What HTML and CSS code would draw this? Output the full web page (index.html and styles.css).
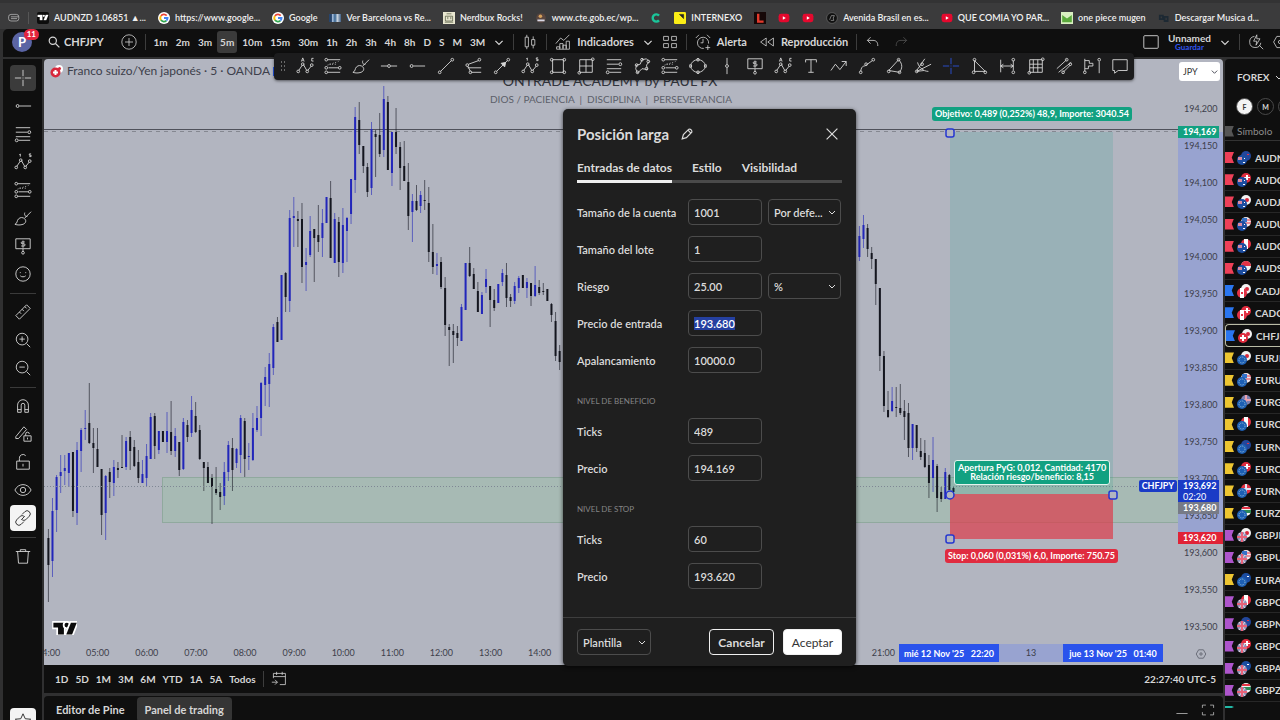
FILE: index.html
```
<!DOCTYPE html>
<html lang="es">
<head>
    <meta charset="UTF-8">
    <meta name="viewport" content="width=device-width, initial-scale=1.0">
    <title>CHFJPY 193,692 Unnamed</title>
    <link rel="stylesheet" href="styles.css">
</head>
<body>

    <!-- icons -->
    <svg class="sprite" aria-hidden="true">
        <symbol id="cross" viewBox="0 0 20 20"><path d="M10 1v7M10 12v7M1 10h7M12 10h7M9.5 10h1"/></symbol>
        <symbol id="ray" viewBox="0 0 20 20"><circle cx="4" cy="10" r="1.6"/><path d="M6 10h13"/></symbol>
        <symbol id="hline" viewBox="0 0 20 20"><circle cx="10" cy="10" r="1.6"/><path d="M1 10h7M12 10h7"/></symbol>
        <symbol id="fib" viewBox="0 0 20 20"><path d="M2 3h16M2 8h13M2 13h16M5 17h13"/><circle cx="17" cy="8" r="1.6"/><circle cx="3" cy="17" r="1.6"/></symbol>
        <symbol id="wave" viewBox="0 0 20 20"><path d="M3 15L7 9M8 8l4 7M13 15l4-5"/><circle cx="2.5" cy="16" r="1.5"/><circle cx="7.5" cy="8" r="1.5"/><circle cx="12.5" cy="16" r="1.5"/><circle cx="17.5" cy="9" r="1.5"/><path d="M7 4V1l-1 1M19 1h-2v1.500h2v1.500h-2"/></symbol>
        <symbol id="abc" viewBox="0 0 20 20"><path d="M3 15L7 9M8 8l4 7M13 15l4-5"/><circle cx="2.500" cy="16" r="1.500"/><circle cx="7.500" cy="8" r="1.500"/><circle cx="12.500" cy="16" r="1.500"/><circle cx="17.500" cy="9" r="1.500"/><path d="M6 5l1.500-4L9 5M7 4h1M19.500 1.500h-2v3h2"/></symbol>
        <symbol id="forecast" viewBox="0 0 20 20"><path d="M4 3h14M5 12h11M4 17h14"/><circle cx="2.500" cy="3" r="1.500"/><circle cx="2.500" cy="12" r="1.500"/><circle cx="17.500" cy="12" r="1.500"/><circle cx="2.500" cy="17" r="1.500"/><path d="M4 9l12-4M6 8h9" stroke-dasharray="1 2"/></symbol>
        <symbol id="brush" viewBox="0 0 20 20"><path d="M1 17c3-1 2-4 4-6 2-2 5-2 7 0s1 5-2 6c-3 1-6 1-9 0zM12 10l7-7M12 4c-1 3 1 5 3 4"/></symbol>
        <symbol id="pricenote" viewBox="0 0 20 20"><path d="M2 2h16v11H2zM10 13v3M12 5.500H9a1 1 0 0 0 0 2h2a1 1 0 0 1 0 2.500H8M10 4v8"/><circle cx="10" cy="17.500" r="1.500"/></symbol>
        <symbol id="smile" viewBox="0 0 20 20"><circle cx="10" cy="10" r="8"/><path d="M7 8v1M13 8v1M7 12c1 1.500 5 1.500 6 0"/></symbol>
        <symbol id="ruler" viewBox="0 0 20 20"><path d="M2 14L14 2l4 4L6 18zM6 10l2 2M9 7l2 2M12 4l2 2"/></symbol>
        <symbol id="zoomin" viewBox="0 0 20 20"><circle cx="9" cy="9" r="6.500"/><path d="M14 14l4 4M6 9h6M9 6v6"/></symbol>
        <symbol id="zoomout" viewBox="0 0 20 20"><circle cx="9" cy="9" r="6.500"/><path d="M14 14l4 4M6 9h6"/></symbol>
        <symbol id="magnet" viewBox="0 0 20 20"><path d="M4 17V9a6 6 0 0 1 12 0v8h-4V9a2 2 0 0 0-4 0v8zM4 14h4M12 14h4"/></symbol>
        <symbol id="lockpen" viewBox="0 0 20 20"><path d="M2 13L11 2l3 3-9 10H2zM11 12h8v6h-8zM13 12v-2a2 2 0 0 1 4 0M15 14v2"/></symbol>
        <symbol id="lock" viewBox="0 0 20 20"><path d="M3 9h14v9H3zM6 9V6a4 4 0 0 1 7-3M10 12v3"/></symbol>
        <symbol id="eye" viewBox="0 0 20 20"><path d="M1 10c4-8 14-8 18 0-4 8-14 8-18 0z"/><circle cx="10" cy="10" r="3"/></symbol>
        <symbol id="link" viewBox="0 0 20 20"><path d="M9 6l3-3a3.500 3.500 0 0 1 5 5l-4 4a3.500 3.500 0 0 1-4 0M11 14l-3 3a3.500 3.500 0 0 1-5-5l4-4a3.500 3.500 0 0 1 4 0M8 12l4-4"/></symbol>
        <symbol id="trash" viewBox="0 0 20 20"><path d="M2 5h16M7 5V3h6v2M4 5l1 13h10l1-13"/></symbol>
        <symbol id="star" viewBox="0 0 20 20"><path d="M10 2l2.500 5.500 6 .5-4.500 4 1.500 6-5.500-3-5.500 3L6 12 1.500 8l6-.5z"/></symbol>
        <symbol id="search" viewBox="0 0 20 20"><circle cx="8" cy="8" r="6"/><path d="M12.500 12.500L19 19"/></symbol>
        <symbol id="plus" viewBox="0 0 20 20"><circle cx="10" cy="10" r="9"/><path d="M10 5v10M5 10h10"/></symbol>
        <symbol id="down" viewBox="0 0 10 10"><path d="M2 4l3 3 3-3"/></symbol>
        <symbol id="candles" viewBox="0 0 20 20"><path d="M4 4h4v12H4zM12 7h4v7h-4zM6 1v3M6 16v3M14 3v4M14 14v4"/></symbol>
        <symbol id="indic" viewBox="0 0 20 20"><path d="M1 12L7 5l4 3 7-7M2 19v-3h4v3M6 18v-6h4v7M10 18v-4h4v5M14 18V9h4v10H2"/></symbol>
        <symbol id="grid4" viewBox="0 0 20 20"><path d="M2 3h6v5H2zM12 3h6v5h-6zM2 12h6v5H2zM12 12h6v5h-6z"/></symbol>
        <symbol id="alarm" viewBox="0 0 20 20"><path d="M17 12a7 7 0 1 0-6 6M10 6v5H7M1 5l4-4M15 1l4 4M16 14v6M13 17h6"/></symbol>
        <symbol id="replay" viewBox="0 0 20 20"><path d="M9 5v10l-7-5zM18 5v10l-7-5z"/></symbol>
        <symbol id="undo" viewBox="0 0 20 20"><path d="M7 4L3 8l4 4M3 8h7c4 0 6 2 6 7"/></symbol>
        <symbol id="redo" viewBox="0 0 20 20"><path d="M13 4l4 4-4 4M17 8h-7c-4 0-6 2-6 7"/></symbol>
        <symbol id="square" viewBox="0 0 20 20"><rect x="2" y="3" width="16" height="14" rx="1"/></symbol>
        <symbol id="boltsearch" viewBox="0 0 20 20"><path d="M8 3a7 7 0 1 0 8 8M14 14l5 5M11 1L7 9h4l-1 5 5-8h-4z"/></symbol>
        <symbol id="trend" viewBox="0 0 20 20"><circle cx="3" cy="17" r="1.500"/><circle cx="17" cy="3" r="1.500"/><path d="M4 16L16 4"/></symbol>
        <symbol id="pitch" viewBox="0 0 20 20"><path d="M4 8L15 4M3 12h15M7 17h11M3 10l3 6"/><circle cx="2.500" cy="9" r="1.500"/><circle cx="16" cy="3" r="1.500"/><circle cx="6" cy="17" r="1.500"/></symbol>
        <symbol id="arrow" viewBox="0 0 20 20"><circle cx="3" cy="17" r="1.500"/><path d="M4 16L16 4"/><circle cx="17" cy="3" r="1.500"/><path class="fill" d="M14 6l-5 1 4 4z"/></symbol>
        <symbol id="rect" viewBox="0 0 20 20"><path d="M4 3h12v14H4z"/><circle cx="3" cy="3" r="1.500"/><circle cx="17" cy="3" r="1.500"/><circle cx="3" cy="17" r="1.500"/><circle cx="17" cy="17" r="1.500"/></symbol>
        <symbol id="gann" viewBox="0 0 20 20"><path d="M3 3h14v14H3zM10 3v14M3 10h14"/><circle cx="17.500" cy="2.500" r="1.500"/><circle cx="2.500" cy="17.500" r="1.500"/></symbol>
        <symbol id="path" viewBox="0 0 20 20"><path d="M4 9l4-1 2-5 5-1 3 3-3 4 1 5-6-1-5 5-2-5z"/><circle cx="4" cy="9" r="1.500"/><circle cx="10" cy="3" r="1.500"/><circle cx="17" cy="5" r="1.500"/><circle cx="15" cy="13" r="1.500"/><circle cx="5" cy="17" r="1.500"/></symbol>
        <symbol id="ellipse" viewBox="0 0 20 20"><ellipse cx="10" cy="10" rx="8" ry="7"/><circle cx="1.500" cy="10" r="1.500"/><circle cx="18.500" cy="10" r="1.500"/><circle cx="10" cy="3" r="1.500"/><circle cx="10" cy="17" r="1.500"/></symbol>
        <symbol id="vline" viewBox="0 0 20 20"><path d="M10 1v7M10 12v7"/><circle cx="10" cy="10" r="1.600"/></symbol>
        <symbol id="text" viewBox="0 0 20 20"><path d="M4 6V3h12v3M10 3v14M7 17h6"/></symbol>
        <symbol id="zigzag" viewBox="0 0 20 20"><path d="M1 15l5-7 5 6 7-9M13 5h5v5"/></symbol>
        <symbol id="curve" viewBox="0 0 20 20"><path d="M3 16c1-8 5-5 6-7l7-5"/><circle cx="3" cy="17" r="1.500"/><circle cx="9" cy="8" r="1.500"/><circle cx="17" cy="3" r="1.500"/></symbol>
        <symbol id="sector" viewBox="0 0 20 20"><path d="M3 15L14 3c5 5 4 10 1 14L3 15"/><circle cx="3" cy="16" r="1.500"/><circle cx="14" cy="3" r="1.500"/><circle cx="15" cy="17" r="1.500"/></symbol>
        <symbol id="fan" viewBox="0 0 20 20"><path d="M3 15L12 2M3 16l16-8M4 6c1 5 6 10 12 10M3 16l8-1"/><circle cx="3" cy="16" r="1.500"/><circle cx="9" cy="8" r="1.500"/></symbol>
        <symbol id="triangle" viewBox="0 0 20 20"><path d="M5 4v12h12z"/><circle cx="5" cy="3" r="1.500"/><circle cx="4" cy="17" r="1.500"/><circle cx="17" cy="17" r="1.500"/></symbol>
        <symbol id="range" viewBox="0 0 20 20"><path d="M3 3v14M17 4v11M3 10h13M6 8l-3 2 3 2M14 8l3 2-3 2"/><circle cx="17" cy="3" r="1.500"/><circle cx="17" cy="17" r="1.500"/></symbol>
        <symbol id="gridbox" viewBox="0 0 20 20"><path d="M3 3h14v14H3zM7 3v14M12 3v14M3 8h14M3 12h14"/><circle cx="17.500" cy="2.500" r="1.500"/><circle cx="2.500" cy="17.500" r="1.500"/></symbol>
        <symbol id="channel" viewBox="0 0 20 20"><path d="M2 13L13 3M4 17L18 6M9 17l8-8"/><circle cx="13" cy="3" r="1.500"/><circle cx="17" cy="8" r="1.500"/><circle cx="9" cy="17" r="1.500"/></symbol>
        <symbol id="profile" viewBox="0 0 20 20"><path d="M2 2v14M2 4h5v3h4v3H6v3H2M18 5v13"/><circle cx="2" cy="17" r="1.500"/><circle cx="18" cy="3" r="1.500"/></symbol>
        <symbol id="comment" viewBox="0 0 20 20"><path d="M2 3h16v12H8l-4 3v-3H2z"/></symbol>
        <symbol id="calendar" viewBox="0 0 20 20"><path d="M3 9V3h15v14h-7M3 7h15M7 1v4M14 1v4M1 14h7M5 11l3 3-3 3"/></symbol>
        <symbol id="pencil" viewBox="0 0 20 20"><path d="M2 18l2-7 9-9c3-1 6 2 5 5l-9 9zM12 4l4 4"/></symbol>
        <symbol id="close" viewBox="0 0 20 20"><path d="M1 1l18 18M19 1L1 19"/></symbol>
        <symbol id="hex" viewBox="0 0 20 20"><path d="M6 3h8l4 7-4 7H6l-4-7z"/><circle cx="10" cy="10" r="2"/></symbol>
        <symbol id="full" viewBox="0 0 20 20"><path d="M2 7V3h5M13 3h5v4M18 13v4h-5M7 17H2v-4"/></symbol>
        <symbol id="google" viewBox="0 0 20 20"><circle cx="10" cy="10" r="10" fill="#fff" stroke="none"/><path d="M14.500 6A6 6 0 0 0 5 6.500" stroke="#ea4335" stroke-width="3"/><path d="M5 6.500a6 6 0 0 0 0 7" stroke="#fbbc05" stroke-width="3"/><path d="M5 13.500a6 6 0 0 0 9 1" stroke="#34a853" stroke-width="3"/><path d="M10 10h6c0 2-1 3.500-2 4.500" stroke="#4285f4" stroke-width="3"/></symbol>
        <symbol id="youtube" viewBox="0 0 20 20"><rect x="1" y="3" width="18" height="14" rx="4" fill="#e5092e" stroke="none"/><path d="M8 7l5 3-5 3z" fill="#fff" stroke="none"/></symbol>
        <symbol id="tv" viewBox="0 0 22 12"><path d="M1 1h9v10H5V5H1z"/><circle cx="12.500" cy="3" r="2"/><path d="M16 1h5l-4 10h-5z"/></symbol>
    </svg>

    <nav class="bookmarks" aria-label="Marcadores">
        <svg class="icon" viewBox="0 0 20 20"><rect x="1" y="4" width="17" height="11" rx="4"/><path d="M5 8h13M5 11h10"/></svg>
        <span class="divider"></span>
        <a href="#"><span class="fav black"><svg viewBox="0 0 22 12"><use href="#tv"/></svg></span>AUDNZD 1.06851 ▲...</a>
        <a href="#"><svg class="fav"><use href="#google"/></svg>https://www.google...</a>
        <a href="#"><svg class="fav"><use href="#google"/></svg>Google</a>
        <a href="#"><span class="fav fcb"></span>Ver Barcelona vs Re...</a>
        <a href="#"><svg class="fav" viewBox="0 0 20 20"><rect width="20" height="20" fill="#e9e7d0" stroke="none"/><path d="M4 7h12v8H4zM6 3h8M3 17h14M8 8v4M13 8v4" stroke="#333a22"/></svg>Nerdbux Rocks!</a>
        <a href="#"><svg class="fav" viewBox="0 0 20 20"><circle cx="10" cy="10" r="8" fill="#59463f" stroke="none"/><circle cx="9" cy="7" r="3" fill="#d5a05b" stroke="none"/><path d="M4 14h12" stroke="#d8d8e6" stroke-width="3"/></svg>www.cte.gob.ec/wp...</a>
        <a href="#" class="solo" aria-label="C"><svg class="fav" viewBox="0 0 20 20"><path d="M15 6a6 6 0 1 0 0 8" stroke="#1bc59a" stroke-width="4"/></svg></a>
        <a href="#"><svg class="fav" viewBox="0 0 20 20"><rect width="20" height="20" rx="2" fill="#fbee16" stroke="none"/><path d="M9 4h7v7z" fill="#222" stroke="#222"/></svg>INTERNEXO</a>
        <a href="#" class="solo" aria-label="L"><svg class="fav" viewBox="0 0 20 20"><rect width="20" height="20" fill="#160808" stroke="none"/><path d="M7 3v13h9" stroke="#e43a2c" stroke-width="4"/></svg></a>
        <a href="#" class="solo" aria-label="YouTube"><svg class="fav"><use href="#youtube"/></svg></a>
        <a href="#" class="solo" aria-label="YouTube"><svg class="fav"><use href="#youtube"/></svg></a>
        <a href="#"><svg class="fav" viewBox="0 0 20 20"><circle cx="10" cy="10" r="9" fill="#111" stroke="#777"/><path d="M6 13L9 6h5l-2 4 1 4H8" stroke="#bbb"/></svg>Avenida Brasil en es...</a>
        <a href="#"><svg class="fav"><use href="#youtube"/></svg>QUE COMIA YO PAR...</a>
        <a href="#"><svg class="fav" viewBox="0 0 20 20"><rect width="20" height="20" fill="#d8efc0" stroke="none"/><path d="M2 5l8 6 8-6v12H2z" fill="#5aa93c" stroke="none"/></svg>one piece mugen</a>
        <a href="#"><svg class="fav" viewBox="0 0 20 20"><path d="M3 6h5v6H3zM11 8h5v7h-5z" stroke="#1d2933" stroke-width="3"/></svg>Descargar Musica d...</a>
    </nav>

    <div class="app">
        <header class="topbar">
            <span class="avatar">P<span class="badge">11</span></span>
            <button class="symbol"><svg class="icon small"><use href="#search"/></svg>CHFJPY</button>
            <button aria-label="Comparar"><svg class="icon"><use href="#plus"/></svg></button>
            <span class="divider"></span>
            <div class="intervals">
                <button>1m</button><button>2m</button><button>3m</button><button class="on">5m</button>
                <button>10m</button><button>15m</button><button>30m</button><button>1h</button>
                <button>2h</button><button>3h</button><button>4h</button><button>8h</button>
                <button>D</button><button>S</button><button>M</button><button>3M</button>
            </div>
            <button aria-label="Intervalos"><svg class="icon chev"><use href="#down"/></svg></button>
            <span class="divider"></span>
            <button aria-label="Velas"><svg class="icon"><use href="#candles"/></svg></button>
            <span class="divider"></span>
            <button><svg class="icon"><use href="#indic"/></svg>Indicadores</button>
            <button aria-label="Favoritos"><svg class="icon chev"><use href="#down"/></svg></button>
            <button aria-label="Plantillas"><svg class="icon"><use href="#grid4"/></svg></button>
            <span class="divider"></span>
            <button><svg class="icon"><use href="#alarm"/></svg>Alerta</button>
            <button class="replay"><svg class="icon"><use href="#replay"/></svg>Reproducción</button>
            <span class="divider"></span>
            <button aria-label="Deshacer"><svg class="icon"><use href="#undo"/></svg></button>
            <button class="dim" aria-label="Rehacer"><svg class="icon"><use href="#redo"/></svg></button>
            <div class="topright">
                <button aria-label="Diseño"><svg class="icon big"><use href="#square"/></svg></button>
                <button class="layout"><span>Unnamed</span><small>Guardar</small></button>
                <button aria-label="Diseños"><svg class="icon chev"><use href="#down"/></svg></button>
                <span class="divider"></span>
                <button aria-label="Búsqueda rápida"><svg class="icon"><use href="#boltsearch"/></svg></button>
                <button class="cut" aria-label="Ajustes"><svg class="icon"><use href="#hex"/></svg></button>
            </div>
        </header>

        <aside class="tools">
            <button class="on" aria-label="Cruz"><svg class="icon"><use href="#cross"/></svg></button>
            <button aria-label="Rayo"><svg class="icon"><use href="#ray"/></svg></button>
            <button aria-label="Fibonacci"><svg class="icon"><use href="#fib"/></svg></button>
            <button aria-label="Patrones"><svg class="icon"><use href="#wave"/></svg></button>
            <button aria-label="Previsión"><svg class="icon"><use href="#forecast"/></svg></button>
            <button aria-label="Pincel"><svg class="icon"><use href="#brush"/></svg></button>
            <button aria-label="Nota de precio"><svg class="icon"><use href="#pricenote"/></svg></button>
            <button aria-label="Iconos"><svg class="icon"><use href="#smile"/></svg></button>
            <hr>
            <button aria-label="Medir"><svg class="icon"><use href="#ruler"/></svg></button>
            <button aria-label="Acercar"><svg class="icon"><use href="#zoomin"/></svg></button>
            <button aria-label="Alejar"><svg class="icon"><use href="#zoomout"/></svg></button>
            <hr>
            <button aria-label="Imán"><svg class="icon"><use href="#magnet"/></svg></button>
            <button aria-label="Modo dibujo"><svg class="icon"><use href="#lockpen"/></svg></button>
            <button aria-label="Bloquear"><svg class="icon"><use href="#lock"/></svg></button>
            <button aria-label="Ocultar"><svg class="icon"><use href="#eye"/></svg></button>
            <button class="white" aria-label="Sincronizar"><svg class="icon"><use href="#link"/></svg></button>
            <hr>
            <button aria-label="Eliminar"><svg class="icon"><use href="#trash"/></svg></button>
            <button class="white last" aria-label="Favoritos"><svg class="icon"><use href="#star"/></svg></button>
        </aside>

        <main class="center">
            <section class="chart">
                <svg class="plot" viewBox="44 59 1179 606" preserveAspectRatio="xMinYMin slice">
                    <rect class="zone" x="162.500" y="477.500" width="1016" height="45"/>
                    <path class="level" d="M44 129.500h1134"/>
                    <path class="level dash" d="M44 131.500h1134"/>
                    <g id="candlesLayer"></g>
                    <path class="current" d="M44 486.500h1134"/>
                    <rect class="profit" x="950" y="132" width="163" height="362"/>
                    <rect class="loss" x="950" y="494" width="163" height="45"/>
                    <g class="handles">
                        <rect x="946" y="129" width="8" height="8" rx="2"/>
                        <circle cx="950" cy="495" r="4"/>
                        <rect x="1109" y="491" width="8" height="8" rx="2"/>
                        <rect x="946" y="535" width="8" height="8" rx="2"/>
                    </g>
                </svg>

                <div class="legend">
                    <svg class="pair" viewBox="0 0 14 14"><circle cx="9" cy="5" r="4" fill="#fff"/><circle cx="9.500" cy="4.500" r="1.500" fill="#d8283c"/><circle cx="5.500" cy="8.500" r="5" fill="#d8283c"/><path d="M5.500 6v5M3 8.500h5" stroke="#fff" stroke-width="2"/></svg>
                    Franco suizo/Yen japonés · 5 · OANDA
                    <span class="bluechip"></span>
                </div>
                <div class="watermark">
                    <h1>ONTRADE ACADEMY by PAUL FX</h1>
                    <p>DIOS / PACIENCIA &nbsp;|&nbsp; DISCIPLINA &nbsp;|&nbsp; PERSEVERANCIA</p>
                </div>
                <svg class="tvlogo" viewBox="-1 -1 24 14"><use href="#tv"/></svg>

                <div class="tag target">Objetivo: 0,489 (0,252%) 48,9, Importe: 3040.54</div>
                <div class="tag open">Apertura PyG: 0,012, Cantidad: 4170<br>Relación riesgo/beneficio: 8,15</div>
                <div class="tag stop">Stop: 0,060 (0,031%) 6,0, Importe: 750.75</div>
                <div class="tag pairtag">CHFJPY</div>

                <div class="scale">
                    <span class="band"></span>
                    <select aria-label="Moneda"><option>JPY</option></select>
                    <svg class="icon chev"><use href="#down"/></svg>
                    <ul>
                        <li>194,200</li><li>194,150</li><li>194,100</li><li>194,050</li><li>194,000</li>
                        <li>193,950</li><li>193,900</li><li>193,850</li><li>193,800</li><li>193,750</li>
                        <li>193,700</li><li>193,650</li><li>193,600</li><li>193,550</li><li>193,500</li>
                    </ul>
                    <b class="price green">194,169</b>
                    <b class="price grey">193,680</b>
                    <b class="price blue">193,692<span>02:20</span></b>
                    <b class="price red">193,620</b>
                    <svg class="icon hexicon"><use href="#hex"/></svg>
                </div>

                <div class="timeaxis">
                    <ul>
                        <li>04:00</li><li>05:00</li><li>06:00</li><li>07:00</li><li>08:00</li><li>09:00</li>
                        <li>10:00</li><li>11:00</li><li>12:00</li><li>13:00</li><li>14:00</li><li>15:00</li>
                        <li>16:00</li><li>17:00</li><li>18:00</li><li>19:00</li><li>20:00</li><li>21:00</li>
                    </ul>
                    <div class="span"><b>mié 12 Nov '25 &nbsp; 22:20</b><span>13</span><b>jue 13 Nov '25 &nbsp; 01:40</b></div>
                </div>
            </section>

            <div class="ranges">
                <button>1D</button><button>5D</button><button>1M</button><button>3M</button><button>6M</button>
                <button>YTD</button><button>1A</button><button>5A</button><button>Todos</button>
                <span class="divider"></span>
                <button aria-label="Ir a"><svg class="icon"><use href="#calendar"/></svg></button>
                <button class="clock">22:27:40 UTC-5</button>
            </div>

            <div class="paneltabs">
                <button>Editor de Pine</button>
                <button class="on">Panel de trading</button>
                <div class="panelbtns">
                    <button aria-label="Minimizar"><svg class="icon" viewBox="0 0 20 20"><path d="M2 15h16"/></svg></button>
                    <button aria-label="Maximizar"><svg class="icon"><use href="#full"/></svg></button>
                </div>
            </div>
        </main>

        <aside class="watchlist">
            <h2>FOREX <svg class="icon chev"><use href="#down"/></svg></h2>
            <div class="lists"><button class="on">F</button><button>M</button><button>N</button></div>
            <div class="colhead"><i class="flag"></i>Símbolo</div>
            <ul id="watch"></ul>
            <div class="more"><i class="flag teal"></i></div>
        </aside>

        <div class="drawbar" id="drawbar"></div>

        <form class="dialog" id="dialog">
            <div class="title">
                <h3>Posición larga</h3>
                <button type="button" aria-label="Renombrar"><svg class="icon small"><use href="#pencil"/></svg></button>
                <button type="button" class="x" aria-label="Cerrar"><svg class="icon small"><use href="#close"/></svg></button>
            </div>
            <div class="tabs">
                <button type="button" class="on">Entradas de datos</button>
                <button type="button">Estilo</button>
                <button type="button">Visibilidad</button>
            </div>
            <div class="fields">
                <label for="account">Tamaño de la cuenta</label>
                <input type="text" id="account" value="1001">
                <div class="drop">
                    <select aria-label="Divisa de la cuenta"><option>Por defe...</option></select>
                    <svg class="icon chev"><use href="#down"/></svg>
                </div>
                <label for="lot">Tamaño del lote</label>
                <input type="text" id="lot" value="1">
                <label for="risk">Riesgo</label>
                <input type="text" id="risk" value="25.00">
                <div class="drop">
                    <select aria-label="Unidad de riesgo"><option>%</option></select>
                    <svg class="icon chev"><use href="#down"/></svg>
                </div>
                <label for="entry">Precio de entrada</label>
                <input type="text" id="entry" value="193.680">
                <label for="leverage">Apalancamiento</label>
                <input type="text" id="leverage" value="10000.0">
                <h4>NIVEL DE BENEFICIO</h4>
                <label for="tpTicks">Ticks</label>
                <input type="text" id="tpTicks" value="489">
                <label for="tpPrice">Precio</label>
                <input type="text" id="tpPrice" value="194.169">
                <h4>NIVEL DE STOP</h4>
                <label for="slTicks">Ticks</label>
                <input type="text" id="slTicks" value="60">
                <label for="slPrice">Precio</label>
                <input type="text" id="slPrice" value="193.620">
            </div>
            <div class="actions">
                <div class="drop">
                    <select aria-label="Plantilla"><option>Plantilla</option></select>
                    <svg class="icon chev"><use href="#down"/></svg>
                </div>
                <button type="button" class="cancel">Cancelar</button>
                <button type="button" class="ok">Aceptar</button>
            </div>
        </form>
    </div>

    <script src="app.js"></script>
</body>
</html>
```

FILE: styles.css
```
* {
    box-sizing: border-box;
}

body {
    margin: 0;
    height: 100vh;
    overflow: hidden;
    display: flex;
    flex-direction: column;
    background: #303031;
    color: #d6d6d6;
    font-family: "Trebuchet MS", Lato, sans-serif;
    font-size: 11px;
}

ul, h1, h2, h3, h4, p {
    margin: 0;
    padding: 0;
    list-style: none;
}

button {
    display: flex;
    align-items: center;
    gap: 6px;
    padding: 0;
    border: 0;
    background: none;
    color: inherit;
    font: inherit;
    font-weight: bold;
    white-space: nowrap;
}

svg {
    fill: none;
    stroke: currentColor;
    flex: none;
}

.sprite {
    position: absolute;
    width: 0;
    height: 0;
}

.icon {
    width: 16px;
    height: 16px;
}

.icon.small {
    width: 12px;
    height: 12px;
    stroke-width: 2px;
}

.icon.big {
    width: 18px;
    height: 18px;
}

.icon.chev {
    width: 10px;
    height: 10px;
}

.fill {
    fill: currentColor;
}

.divider {
    width: 1px;
    height: 16px;
    background: #3d3d3d;
}

/* bookmarks */
.bookmarks {
    flex: none;
    height: 29px;
    padding: 3px 8px 0;
    display: flex;
    align-items: center;
    gap: 12px;
    background: #3b3b3c;
    border-top: 3px solid #333334;
    font-family: "Segoe UI", Lato, sans-serif;
    font-size: 9px;
    font-weight: 600;
    overflow: hidden;
}

.bookmarks .icon {
    width: 12px;
    height: 12px;
    margin-right: -4px;
}

.bookmarks .divider {
    height: 12px;
    background: #565656;
    margin-right: -4px;
}

.bookmarks a {
    display: flex;
    align-items: center;
    gap: 5px;
    color: #f0f0f0;
    text-decoration: none;
    white-space: nowrap;
}

.fav {
    width: 12px;
    height: 12px;
}

.fav.black {
    display: flex;
    align-items: center;
    background: #0c0c0c;
    border-radius: 2px;
}

.fav.black svg {
    width: 12px;
    height: 7px;
    fill: #fff;
    stroke: none;
}

.fav.fcb {
    height: 8px;
    background: linear-gradient(90deg, #27446b 20%, #a9c1dd 30%, #34618e 50%, #c9d3de 70%, #3f5f85);
}

/* app */
.app {
    position: relative;
    flex: 1;
    min-height: 0;
    margin-left: 3px;
    display: grid;
    grid-template-columns: 39px minmax(0, 1fr) 55px;
    grid-template-rows: 28px minmax(0, 1fr);
    gap: 2px;
}

.topbar {
    grid-column: 1 / -1;
    display: flex;
    align-items: center;
    gap: 8px;
    padding: 0 0 3px 9px;
    background: #0f0f0f;
    border-radius: 5px 0 0 0;
    overflow: hidden;
}

.topbar .chev {
    width: 12px;
    height: 12px;
}

.avatar {
    position: relative;
    width: 20px;
    height: 20px;
    line-height: 20px;
    margin-right: 8px;
    border-radius: 50%;
    background: #5a64a4;
    color: #fff;
    font-size: 13px;
    font-weight: bold;
    text-align: center;
}

.badge {
    position: absolute;
    top: -3px;
    right: -7px;
    padding: 0 3px;
    border-radius: 6px;
    background: #e3253e;
    font-size: 8px;
    line-height: 11px;
}

.symbol {
    gap: 4px;
    margin-right: 9px;
}

.intervals {
    display: flex;
    gap: 8px;
    font-size: 10px;
}

.intervals .on {
    margin: 0 -3px;
    padding: 5px 3px;
    border-radius: 3px;
    background: #3b3b3b;
}

.replay {
    margin-left: 4px;
}

.dim {
    color: #555;
    margin-left: 4px;
}

.topright {
    margin-left: auto;
    display: flex;
    align-items: center;
    gap: 8px;
}

.layout {
    flex-direction: column;
    gap: 0;
    font-size: 10px;
    line-height: 10px;
}

.layout small {
    color: #2f55f0;
    font-size: 8px;
    line-height: 8px;
}

.cut {
    margin-right: -8px;
}

/* left tools */
.tools {
    display: flex;
    flex-direction: column;
    align-items: center;
    gap: 2px;
    padding-top: 6px;
    background: #0f0f0f;
    overflow: hidden;
}

.tools button {
    flex: none;
    width: 26px;
    height: 26px;
    justify-content: center;
    border-radius: 4px;
}

.tools .icon {
    width: 18px;
    height: 18px;
}

.tools .on {
    background: #3b3b3b;
}

.tools .white {
    background: #f4f4f4;
    color: #222;
}

.tools .last {
    margin-top: auto;
    margin-bottom: -14px;
}

.tools hr {
    width: 26px;
    height: 1px;
    margin: 4px 0 3px;
    border: 0;
    background: #3a3a3a;
    flex: none;
}

/* chart */
.center {
    display: flex;
    flex-direction: column;
    min-height: 0;
}

.chart {
    position: relative;
    flex: 1;
    min-height: 0;
    display: grid;
    grid-template-columns: minmax(0, 1fr) 45px;
    grid-template-rows: minmax(0, 1fr) 24px;
    background: #b2b5c0;
    border-radius: 4px 4px 0 0;
    color: #3d404b;
    overflow: hidden;
}

.plot {
    position: absolute;
    inset: 0;
    width: 100%;
    height: 100%;
}

.zone {
    fill: #a7bab4;
    stroke: #90a99e;
}

.level {
    stroke: #4f515b;
}

.level.dash {
    stroke: #858891;
    stroke-dasharray: 4 4;
}

.current {
    stroke: #7f8794;
    stroke-dasharray: 1 2;
}

.up {
    fill: #2226ba;
    stroke: none;
}

.down {
    fill: #14161f;
    stroke: none;
}

.wick {
    opacity: 0.6;
}

.profit {
    fill: #089981;
    fill-opacity: 0.14;
    stroke: none;
}

.loss {
    fill: #dd3c4a;
    fill-opacity: 0.7;
    stroke: none;
}

.handles {
    fill: #b2b5c0;
    stroke: #2436d0;
    stroke-width: 1.500px;
}

.legend {
    position: absolute;
    top: 4px;
    left: 6px;
    display: flex;
    align-items: center;
    gap: 3px;
    font-size: 12px;
    line-height: 16px;
    white-space: nowrap;
}

.pair {
    width: 14px;
    height: 14px;
    stroke: none;
}

.bluechip {
    width: 12px;
    height: 9px;
    background: #2255e8;
}

.watermark {
    position: absolute;
    top: 13px;
    left: 446px;
    width: 240px;
    text-align: center;
    white-space: nowrap;
}

.watermark h1 {
    font-size: 14px;
    font-weight: normal;
    line-height: 18px;
    color: #33353d;
}

.watermark p {
    font-size: 10px;
    line-height: 18px;
    color: #5c5f69;
}

.tvlogo {
    position: absolute;
    left: 7px;
    top: 561px;
    width: 26px;
    height: 15px;
    fill: #0c0c0c;
    stroke: #fff;
    stroke-width: 3px;
    paint-order: stroke;
}

.tag {
    position: absolute;
    padding: 0 3px;
    border-radius: 3px;
    color: #fff;
    font-size: 9px;
    font-weight: bold;
    line-height: 14px;
    text-align: center;
    white-space: nowrap;
}

.target {
    left: 888px;
    top: 48px;
    background: #12a181;
}

.open {
    left: 910px;
    top: 401px;
    padding: 2px 3px 3px;
    border: 1px solid #e4f3ee;
    background: #12a181;
    line-height: 9px;
}

.stop {
    left: 901px;
    top: 490px;
    background: #e02c40;
}

.pairtag {
    right: 46px;
    top: 421px;
    line-height: 12px;
    border-radius: 2px;
    background: #1a3bc6;
}

.scale {
    position: relative;
    grid-column: 2;
    grid-row: 1 / 3;
    padding-top: 3px;
    font-size: 9px;
}

.scale select {
    position: relative;
    display: block;
    width: 41px;
    height: 19px;
    margin-left: 1px;
    padding: 0 4px;
    appearance: none;
    border: 0;
    border-radius: 3px;
    background: #fff;
    color: #333;
    font: inherit;
}

.scale .chev {
    position: absolute;
    top: 8px;
    right: 4px;
    width: 9px;
    height: 9px;
}

.scale ul {
    position: relative;
    margin-top: 9px;
}

.scale li {
    height: 37px;
    line-height: 37px;
    padding-left: 6px;
}

.band {
    position: absolute;
    inset: 73px 0 126px 0;
    background: #98a3d0;
}

.price {
    position: absolute;
    left: 0;
    width: 41px;
    padding-left: 5px;
    color: #fff;
    line-height: 12px;
}

.price span {
    display: block;
    line-height: 10px;
    font-weight: normal;
}

.green {
    top: 67px;
    background: #12a181;
}

.blue {
    top: 421px;
    background: #1a3bc6;
}

.grey {
    top: 443px;
    background: #777b87;
}

.red {
    top: 473px;
    width: 45px;
    background: #e02336;
}

.hexicon {
    position: absolute;
    right: 16px;
    bottom: 5px;
    width: 12px;
    height: 12px;
}

.timeaxis {
    position: relative;
    grid-column: 1;
    grid-row: 2;
    font-size: 9px;
    overflow: hidden;
}

.timeaxis ul {
    display: flex;
    width: 884px;
    margin-left: -20px;
}

.timeaxis li {
    flex: 1;
    line-height: 24px;
    text-align: center;
}

.span {
    position: absolute;
    left: 855px;
    top: 3px;
    width: 264px;
    display: flex;
    justify-content: space-between;
    background: #98a3d0;
    line-height: 18px;
}

.span b {
    width: 100px;
    background: #2a53ec;
    color: #fff;
    line-height: 20px;
    height: 18px;
    text-align: center;
}

/* bottom bars */
.ranges {
    flex: none;
    display: flex;
    align-items: center;
    gap: 7px;
    height: 28px;
    padding: 0 7px 0 11px;
    margin-bottom: 3px;
    background: #0f0f0f;
    font-size: 10px;
}

.clock {
    margin-left: auto;
}

.paneltabs {
    flex: none;
    display: flex;
    height: 24px;
    padding-left: 4px;
    gap: 4px;
    background: #0f0f0f;
    border-radius: 4px 4px 0 0;
}

.paneltabs button {
    height: 25px;
    margin-top: 1px;
    padding: 0 8px;
    border-radius: 4px;
}

.paneltabs .on {
    background: #353535;
}

.panelbtns {
    margin-left: auto;
    display: flex;
    padding-right: 2px;
}

.panelbtns button {
    padding: 0 6px;
}

.panelbtns .icon {
    width: 14px;
    height: 14px;
}

/* watchlist */
.watchlist {
    display: flex;
    flex-direction: column;
    min-width: 0;
    background: #0f0f0f;
    border-radius: 4px 0 0 0;
    overflow: hidden;
}

.watchlist h2 {
    display: flex;
    align-items: center;
    gap: 4px;
    height: 35px;
    padding-left: 12px;
    font-size: 10px;
}

.lists {
    display: flex;
    gap: 4px;
    padding-left: 11px;
    height: 28px;
}

.lists button {
    flex: none;
    width: 17px;
    height: 17px;
    margin-top: 4px;
    justify-content: center;
    border: 1px solid #4a4a4a;
    border-radius: 50%;
    font-size: 7px;
}

.lists .on {
    background: #f4f4f4;
    color: #333;
}

.colhead {
    display: flex;
    align-items: center;
    gap: 3px;
    height: 19px;
    margin-bottom: 6px;
    border-bottom: 1px solid #333;
    color: #8c8c8c;
    font-size: 10px;
}

.flag {
    flex: none;
    width: 9px;
    height: 11px;
    background: #555;
    clip-path: polygon(0 0, 100% 0, 75% 50%, 100% 100%, 0 100%);
}

.flag.r { background: #ee4058; }
.flag.b { background: #2a76f0; }
.flag.y { background: #edc531; }
.flag.p { background: #ae55cc; }
.flag.teal { background: #22b8a6; }

#watch {
    flex: 1;
    min-height: 0;
    display: flex;
    flex-direction: column;
}

#watch li {
    flex: 1;
    min-height: 0;
    display: flex;
    align-items: center;
    border-bottom: 1px solid #272727;
    font-size: 10px;
    font-weight: bold;
    overflow: hidden;
}

#watch li.on {
    border: 1px solid #b9bba5;
    border-right: 0;
    border-radius: 4px 0 0 4px;
}

#watch svg {
    width: 14px;
    height: 14px;
    margin: 0 4px 0 3px;
    stroke: none;
}

.more {
    flex: none;
    height: 18px;
    padding-top: 4px;
}

.more .flag {
    display: block;
    height: 2px;
}

/* floating drawing toolbar */
.drawbar {
    position: absolute;
    top: 24px;
    left: 271px;
    right: 146px;
    height: 27px;
    display: flex;
    align-items: center;
    justify-content: space-between;
    padding: 0 5px 2px 6px;
    border-radius: 4px;
    background: #1c1c1d;
    box-shadow: 0 1px 3px #0008;
}

.drawbar .icon {
    width: 18px;
    height: 18px;
}

.drawbar .sel {
    color: #2a50d8;
}

.grip {
    width: 6px;
    height: 12px;
    background: radial-gradient(circle, #6a6a6a 1px, transparent 1px) 0 0 / 3px 4px;
}

/* dialog */
.dialog {
    position: absolute;
    top: 80px;
    left: 560px;
    width: 293px;
    display: flex;
    flex-direction: column;
    border-radius: 5px;
    background: #1f1f1f;
    color: #dbdbdb;
    box-shadow: 0 1px 4px #000a;
}

.title {
    display: flex;
    align-items: center;
    gap: 12px;
    height: 46px;
    padding: 4px 18px 0 14px;
}

.title h3 {
    font-size: 15px;
}

.title .x {
    margin-left: auto;
}

.tabs {
    display: flex;
    gap: 20px;
    margin: 0 14px;
    height: 28px;
    border-bottom: 3px solid #4a4a4a;
}

.tabs button {
    height: 28px;
    padding-top: 2px;
    padding-bottom: 3px;
    border-bottom: 3px solid transparent;
    font-size: 12px;
}

.tabs .on {
    border-color: #f0f0f0;
}

.fields {
    display: grid;
    grid-template-columns: 105px 74px 73px;
    column-gap: 6px;
    row-gap: 11px;
    padding: 16px 14px 28px;
    align-items: center;
}

.fields label {
    grid-column: 1;
    font-weight: 600;
    white-space: nowrap;
}

.fields input,
.drop select {
    width: 100%;
    height: 26px;
    padding: 0 5px;
    border: 1px solid #4c4c4c;
    border-radius: 4px;
    background: #1f1f1f;
    color: #dbdbdb;
    font: inherit;
    font-weight: 600;
    outline: none;
}

.fields input::selection {
    background: #2540a0;
    color: #fff;
}

.fields h4 {
    grid-column: 1 / -1;
    height: 23px;
    line-height: 34px;
    color: #858585;
    font-size: 8px;
    font-weight: normal;
}

.drop {
    position: relative;
}

.drop select {
    appearance: none;
}

.drop .chev {
    position: absolute;
    right: 4px;
    top: 8px;
    pointer-events: none;
}

.actions {
    display: flex;
    align-items: center;
    gap: 9px;
    height: 49px;
    padding: 0 14px;
    border-top: 1px solid #3e3e3e;
}

.actions .drop {
    width: 74px;
    margin-right: auto;
}

.actions button {
    height: 26px;
    padding: 0 8px;
    border: 1px solid #f0f0f0;
    border-radius: 4px;
    font-size: 12px;
}

.actions .ok {
    background: #fff;
    color: #333;
    font-weight: normal;
}
```

FILE: app.js
```
const NS = 'http://www.w3.org/2000/svg';
const STEP = 4.09;

// u/d, high, body top, body bottom, low
const leftCandles = `d529,538,565,602 u498,511,561,577 u475,477,510,532 u455,472,476,493 u455,468,471,485 u453,453,473,487
d452,452,511,517 u442,450,513,525 u428,430,451,472 u410,428,429,440 d383,423,443,444 d428,443,448,473 d428,449,467,467
d469,469,515,535 u475,476,513,540 d468,472,482,498 u460,467,483,496 d462,468,470,478 d435,467,468,468 u437,441,467,470
d431,437,451,470 d440,447,466,467 d450,462,478,483 u460,474,483,483 u444,456,478,486 u413,417,459,459 d413,416,446,459
u431,431,450,454 d431,431,442,442 u412,431,442,453 d401,432,451,455 u428,436,451,457 d442,442,470,476 u418,422,469,470
d420,425,437,442 u396,410,433,437 d402,416,432,433 d425,430,459,460 d462,462,468,491 d462,467,483,483 d474,478,487,524
d467,489,493,495 d483,492,497,510 u462,472,496,505 u441,445,472,481 d438,448,470,491 u448,449,463,468 u415,418,455,473
d418,421,459,477 u443,456,457,470 u413,428,460,461 u406,418,430,432 u382,383,418,436 u367,377,385,406 u353,364,384,407
u324,327,368,375 d317,322,342,342 u275,275,340,340 d272,273,297,312 u210,218,301,312 u197,216,218,247 d211,219,221,247
d203,219,267,283 u248,262,265,291 u216,231,255,257 d229,229,238,282 d205,235,242,252 u209,223,238,257 u197,197,223,223
d181,198,258,258 u213,219,263,263 d217,222,262,277 u208,225,263,273 u217,218,231,262 u179,179,214,224 u107,117,180,193
d102,120,145,154 d146,146,166,173 d163,167,192,197 u122,129,188,195 d130,134,137,177 d113,135,154,157 u86,99,150,157
d96,102,170,170 u132,132,173,186 d108,132,147,154 d142,147,168,190 d141,166,181,181 d163,182,216,230 u194,201,212,242
d185,201,210,211 u191,195,206,213 d180,200,201,210 d187,203,252,262 d224,252,267,274 u253,264,266,275 d257,262,287,289
d277,288,325,336 d324,327,330,366 d324,331,335,363 d326,333,338,346 u304,307,341,341 u263,263,310,310 d247,263,276,277
d268,274,289,289 d282,291,312,312 u292,295,314,314 u269,279,287,293 d286,286,300,327 d289,300,308,311 u284,284,303,303
u269,273,282,286 d263,275,298,307 d294,297,301,307 u282,286,301,304 u276,278,288,293 d275,275,288,288 u278,282,288,298
d283,283,296,306 u266,285,296,297 d280,287,293,295 d283,291,292,295 d289,289,301,301 d303,304,315,322 d312,321,356,361
d345,351,362,370`;

const rightCandles = `u226,236,257,261 u215,225,239,248 d224,228,249,257 d247,253,259,269 d259,259,284,305 d288,288,356,371
d351,356,406,412 d391,410,417,418 u387,401,411,412 d387,407,408,417 d384,408,413,415 d400,411,417,440 d403,413,448,457
u424,424,448,460 d425,425,448,452 d438,451,457,460 d440,453,467,468 d455,465,483,498 u437,460,478,492 d464,466,498,512
d487,492,499,502 u468,472,499,499 d474,475,490,490 d487,488,492,494`;

function drawCandles(data, startX) {
    const layer = document.getElementById('candlesLayer');
    data.split(/\s+/).forEach((c, i) => {
        const type = c[0] === 'u' ? 'up' : 'down';
        const [high, top, bottom, low] = c.slice(1).split(',').map(Number);
        const x = startX + i * STEP;
        addRect(layer, x - 0.5, high, 1, low - high, type + ' wick');
        addRect(layer, x - 1, top, 2, bottom - top, type);
    });
}

function addRect(parent, x, y, w, h, cls) {
    const r = document.createElementNS(NS, 'rect');
    r.setAttribute('x', x);
    r.setAttribute('y', y);
    r.setAttribute('width', w);
    r.setAttribute('height', h);
    r.setAttribute('class', cls);
    parent.appendChild(r);
}

drawCandles(leftCandles, 48.4);
drawCandles(rightCandles, 859.4);

// drawing toolbar
const tools = ['abc', 'forecast', 'brush', 'hline', 'ray', 'trend', 'pitch', 'arrow', 'wave', 'rect', 'gann', 'fib',
    'path', 'forecast', 'ellipse', 'vline', 'pricenote', 'abc', 'text', 'zigzag', 'curve', 'sector', 'fan', 'cross',
    'triangle', 'range', 'gridbox', 'channel', 'profile', 'comment'];
document.getElementById('drawbar').innerHTML = '<span class="grip"></span>' + tools.map(t =>
    `<button aria-label="${t}"${t === 'cross' ? ' class="sel"' : ''}><svg class="icon"><use href="#${t}"/></svg></button>`
).join('');

// watchlist: flag colour + symbol
const symbols = ['r AUDNZD', 'r AUDCHF', 'r AUDJPY', 'r AUDUSD', 'r AUDCAD', 'r AUDSGD', 'b CADJPY', 'b CADCHF',
    'b CHFJPY', 'y EURJPY', 'y EURUSD', 'y EURGBP', 'y EURCAD', 'y EURNZD', 'y EURCHF', 'y EURNOK', 'y EURZAR',
    'p GBPJPY', 'p GBPUSD', 'y EURAUD', 'p GBPCAD', 'p GBPNZD', 'p GBPCHF', 'p GBPAUD', 'p GBPZAR'];

const base = {
    AUD: '<circle cx="5" cy="9" r="5" fill="#1c4da0"/><path d="M1 6h4v3H1z" fill="#d98aa0"/><path d="M6 11h2v1H6zM7 7h1v1H7z" fill="#fff"/>',
    CAD: '<circle cx="5" cy="9" r="5" fill="#e33346"/><path d="M3 4h4v10H3z" fill="#fff"/><path d="M4 8h2v2H4z" fill="#e33346"/>',
    CHF: '<circle cx="5" cy="9" r="5" fill="#e02d3f"/><path d="M4 6h2v6H4zM2 8h6v2H2z" fill="#fff"/>',
    EUR: '<circle cx="5" cy="9" r="5" fill="#1d5fb4"/><circle cx="5" cy="9" r="3" fill="none" stroke="#9ec3d8" stroke-dasharray="1 1"/>',
    GBP: '<circle cx="5" cy="9" r="5" fill="#8d90b8"/><path d="M2 5l6 8M8 5l-6 8" stroke="#f0d9e0"/><path d="M4 4h2v10H4zM0 8h10v2H0z" fill="#e8637a"/>'
};
const quote = {
    JPY: '<circle cx="9" cy="5" r="5" fill="#f2f2f2"/><circle cx="10" cy="5" r="2" fill="#d8283c"/>',
    CHF: '<circle cx="9" cy="5" r="5" fill="#e02d3f"/><path d="M9 2h2v5H9zM7 4h6v1H7z" fill="#fff"/>',
    CAD: '<circle cx="9" cy="5" r="5" fill="#e33346"/><path d="M7 0h4v10H7z" fill="#fff"/>',
    USD: '<circle cx="9" cy="5" r="5" fill="#f0e6ea"/><path d="M9 3h5M9 6h5" stroke="#e33346"/><path d="M5 1h5v4H5z" fill="#3572c8"/>',
    SGD: '<circle cx="9" cy="5" r="5" fill="#f2f2f2"/><path d="M4 5a5 5 0 0 1 10 0z" fill="#e33346"/>',
    GBP: '<circle cx="9" cy="5" r="5" fill="#7d7fae"/><path d="M8 0h2v10H8zM4 4h10v2H4z" fill="#e9a0ad"/>',
    NOK: '<circle cx="9" cy="5" r="5" fill="#e33346"/><path d="M8 0h2v10H8zM4 4h10v2H4z" fill="#dfe3f5"/>',
    ZAR: '<circle cx="9" cy="5" r="5" fill="#f2f2f2"/><path d="M5 1h8v2H5z" fill="#e33346"/><path d="M4 4h10v3H4z" fill="#2c8a57"/>',
    NZD: '<circle cx="9" cy="5" r="5" fill="#23479c"/><path d="M10 3h2v1h-2z" fill="#e33346"/>',
    AUD: '<circle cx="9" cy="5" r="5" fill="#1c4da0"/><path d="M10 3h2v1h-2z" fill="#fff"/>'
};

document.getElementById('watch').innerHTML = symbols.map(s => {
    const [color, name] = s.split(' ');
    return `<li${name === 'CHFJPY' ? ' class="on"' : ''}><i class="flag ${color}"></i>
        <svg viewBox="0 0 14 14">${quote[name.slice(3)]}${base[name.slice(0, 3)]}</svg>${name}</li>`;
}).join('');

// entry price is selected when the dialog opens
document.getElementById('entry').select();
```
